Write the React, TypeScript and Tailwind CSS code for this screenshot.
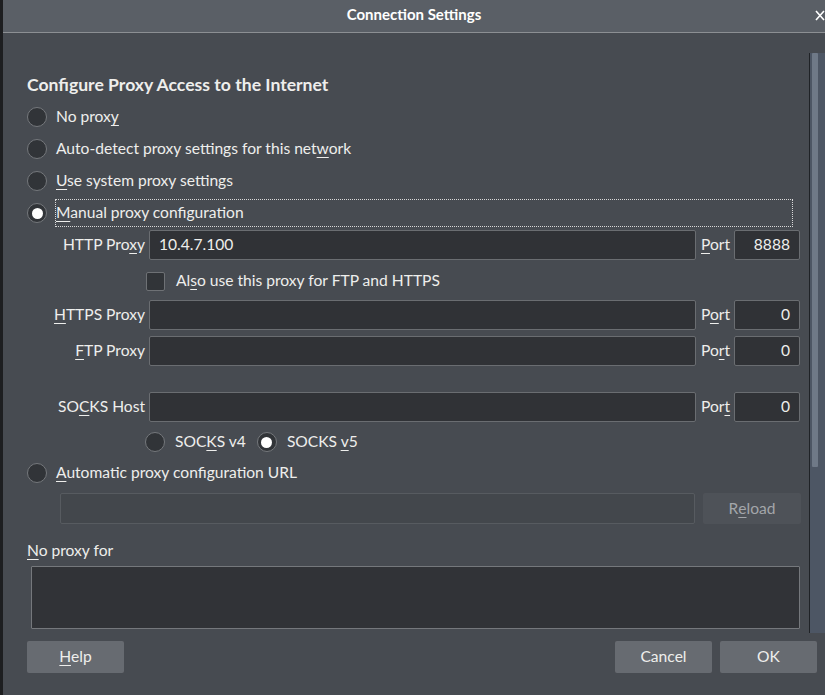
import React from "react";

const font = { fontFamily: "Lato, 'Open Sans', sans-serif" };

function Radio({ checked = false }: { checked?: boolean }) {
  return (
    <span className="w-[20px] h-[20px] shrink-0 rounded-full border border-[#75787c] bg-[#313438] flex items-center justify-center">
      {checked && <span className="w-[11px] h-[11px] rounded-full bg-white" />}
    </span>
  );
}

function U({ children }: { children: React.ReactNode }) {
  return <span className="underline underline-offset-[3px] decoration-[1px]">{children}</span>;
}

function Input({ value = "", right = false, className = "" }: { value?: string; right?: boolean; className?: string }) {
  return (
    <div
      className={`h-[30px] border border-[#6a6d71] bg-[#303236] rounded-[2px] flex items-center px-[9px] text-[15.6px] text-[#eeeeec] ${right ? "justify-end" : ""} ${className}`}
    >
      {value}
    </div>
  );
}

export default function App() {
  return (
    <div className="w-[825px] h-[695px] flex bg-[#1d1e20] text-[#eeeeec] overflow-hidden" style={font}>
      <div className="w-[3px] shrink-0" />
      <div className="flex-1 flex flex-col bg-[#474b51]">
        {/* title bar */}
        <div className="h-[33px] shrink-0 bg-[#5a5f66] border-b border-[#8c8f93] flex items-center justify-center pb-[3px] relative">
          <span className="text-[15px] font-bold text-white">Connection Settings</span>
          <svg className="absolute right-[0px] top-[10px]" width="10" height="11" viewBox="0 0 10 11">
            <path d="M1 1 L9 10 M9 1 L1 10" stroke="#ffffff" strokeWidth="1.6" />
          </svg>
        </div>

        {/* scroll area */}
        <div className="h-[602px] shrink-0 flex">
          <div className="w-[806px] pl-[24px] pr-[8px] flex flex-col text-[15.6px]">
            <div className="h-[28px] mt-[38px] flex items-center text-[17.6px] font-bold">
              Configure Proxy Access to the Internet
            </div>
            <div className="h-[28px] mt-[4px] flex items-center gap-[9px]">
              <Radio />
              <span>
                No prox<U>y</U>
              </span>
            </div>
            <div className="h-[28px] mt-[4px] flex items-center gap-[9px]">
              <Radio />
              <span>
                Auto-detect proxy settings for this net<U>w</U>ork
              </span>
            </div>
            <div className="h-[28px] mt-[4px] flex items-center gap-[9px]">
              <Radio />
              <span>
                <U>U</U>se system proxy settings
              </span>
            </div>
            <div className="h-[28px] mt-[4px] flex items-center gap-[8px]">
              <Radio checked />
              <span className="flex-1 h-[28px] mr-[8px] border border-dotted border-[#d8d8d8] flex items-center">
                <span>
                  <U>M</U>anual proxy configuration
                </span>
              </span>
            </div>

            <div className="flex items-center h-[30px] mt-[3px]">
              <div className="w-[118px] text-right whitespace-nowrap">
                HTTP Pro<U>x</U>y
              </div>
              <Input value="10.4.7.100" className="ml-[4px] w-[547px]" />
              <div className="ml-[5px] w-[33px]">
                <U>P</U>ort
              </div>
              <Input value="8888" className="w-[66px]" right />
            </div>

            <div className="flex items-center h-[30px] mt-[6px]">
              <span className="ml-[119px] w-[19px] h-[19px] rounded-[2px] border border-[#6e7175] bg-[#313438]" />
              <span className="ml-[11px]">
                Al<U>s</U>o use this proxy for FTP and HTTPS
              </span>
            </div>

            <div className="flex items-center h-[30px] mt-[4px]">
              <div className="w-[118px] text-right whitespace-nowrap">
                <U>H</U>TTPS Proxy
              </div>
              <Input className="ml-[4px] w-[547px]" />
              <div className="ml-[5px] w-[33px]">
                P<U>o</U>rt
              </div>
              <Input value="0" className="w-[66px]" right />
            </div>

            <div className="flex items-center h-[30px] mt-[6px]">
              <div className="w-[118px] text-right whitespace-nowrap">
                <U>F</U>TP Proxy
              </div>
              <Input className="ml-[4px] w-[547px]" />
              <div className="ml-[5px] w-[33px]">
                Po<U>r</U>t
              </div>
              <Input value="0" className="w-[66px]" right />
            </div>

            <div className="flex items-center h-[30px] mt-[26px]">
              <div className="w-[118px] text-right whitespace-nowrap">
                SO<U>C</U>KS Host
              </div>
              <Input className="ml-[4px] w-[547px]" />
              <div className="ml-[5px] w-[33px]">
                Por<U>t</U>
              </div>
              <Input value="0" className="w-[66px]" right />
            </div>

            <div className="h-[28px] mt-[6px] flex items-center">
              <span className="ml-[118px]">
                <Radio />
              </span>
              <span className="ml-[10px]">
                SOC<U>K</U>S v4
              </span>
              <span className="ml-[11px]">
                <Radio checked />
              </span>
              <span className="ml-[10px]">
                SOCKS <U>v</U>5
              </span>
            </div>

            <div className="h-[28px] mt-[3px] flex items-center gap-[9px]">
              <Radio />
              <span>
                <U>A</U>utomatic proxy configuration URL
              </span>
            </div>

            <div className="h-[31px] mt-[6px] flex items-center">
              <div className="ml-[33px] w-[635px] h-[31px] border border-[#575b60] bg-[#43474c] rounded-[2px]" />
              <div className="ml-[8px] w-[98px] h-[31px] bg-[#4e5258] rounded-[2px] flex items-center justify-center text-[#a3a6aa]">
                R<U>e</U>load
              </div>
            </div>

            <div className="h-[20px] mt-[17px] flex items-center">
              <span>
                <U>N</U>o proxy for
              </span>
            </div>

            <div className="h-[63px] mt-[5px] ml-[4px] mr-[1px] border border-[#75787c] bg-[#313337] rounded-[1px]" />
          </div>

          {/* scrollbar */}
          <div className="flex-1 flex flex-col pt-[20px] pb-[2px]">
            <div className="flex-1 flex">
              <div className="w-[1px] bg-[#1f2226]" />
              <div className="flex-1 bg-[#4d5664] flex">
                <div className="ml-[2px] w-[6px] h-[414px] bg-[#6f7987] rounded-[1px]" />
              </div>
            </div>
          </div>
        </div>

        {/* buttons */}
        <div className="h-[32px] mt-[6px] flex items-center pl-[24px] pr-[8px] text-[15.6px]">
          <div className="w-[97px] h-[32px] bg-[#676b71] rounded-[2px] flex items-center justify-center">
            <span>
              <U>H</U>elp
            </span>
          </div>
          <div className="flex-1" />
          <div className="w-[97px] h-[32px] bg-[#676b71] rounded-[2px] flex items-center justify-center">Cancel</div>
          <div className="ml-[8px] w-[97px] h-[32px] bg-[#676b71] rounded-[2px] flex items-center justify-center">OK</div>
        </div>
      </div>
    </div>
  );
}
